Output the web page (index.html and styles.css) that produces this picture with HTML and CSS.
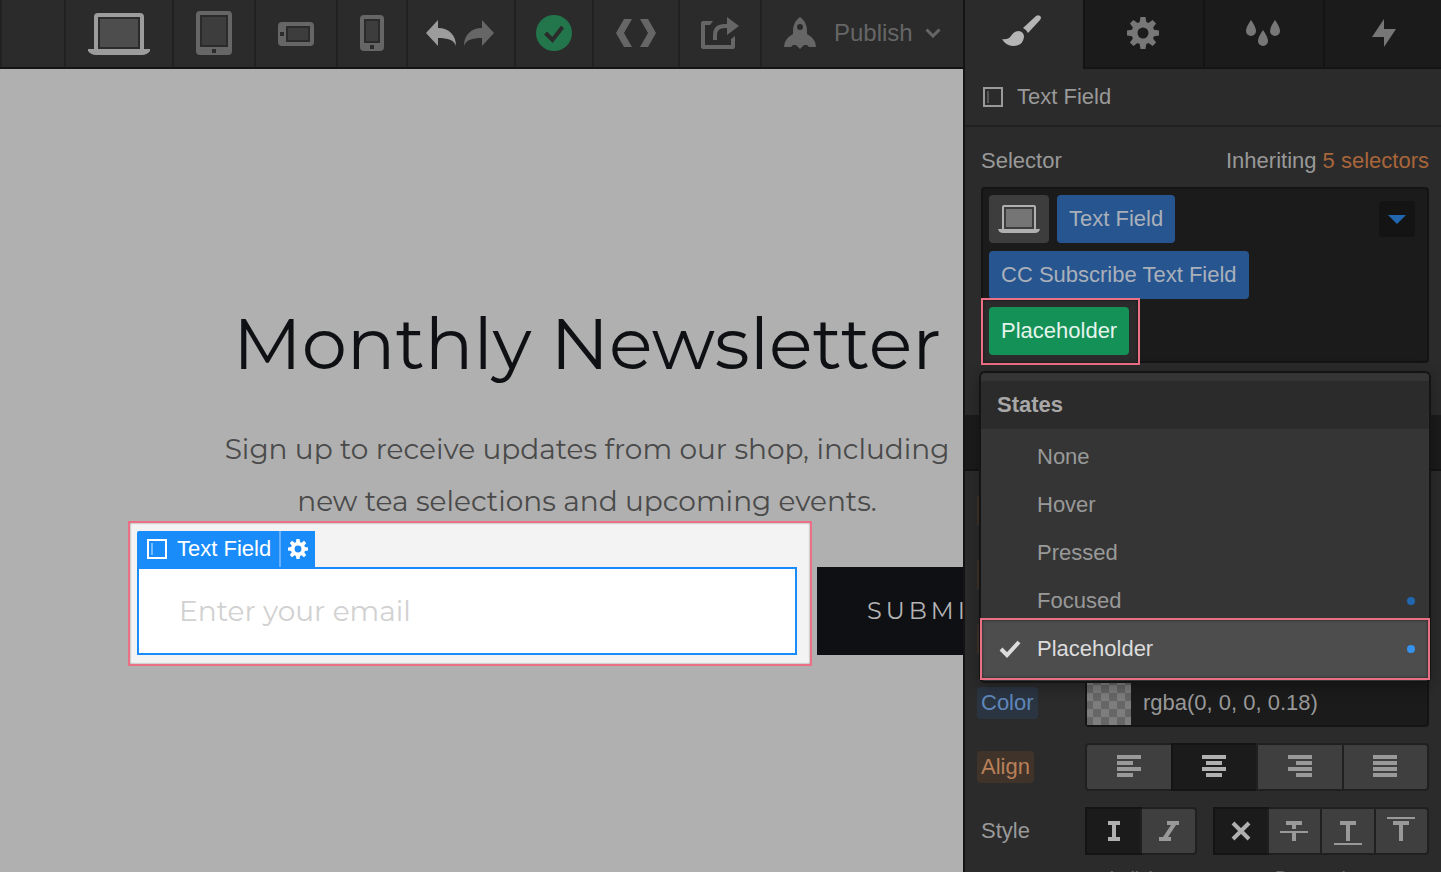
FILE: index.html
```html
<!DOCTYPE html>
<html lang="en">
	<head>
		<meta charset="utf-8">
		<title>Designer</title>
		<link rel="stylesheet" href="styles.css">
	</head>
	<body>
		<svg class="defs" width="0" height="0">
			<symbol id="gear" viewBox="0 0 32 32">
				<path fill-rule="evenodd" d="M13.5 0h5l.8 5 2.2.9 4.1-3 3.5 3.5-3 4.1.9 2.2 5 .8v5l-5 .8-.9 2.2 3 4.1-3.5 3.5-4.1-3-2.2.9-.8 5h-5l-.8-5-2.2-.9-4.1 3-3.5-3.5 3-4.1-.9-2.2-5-.8v-5l5-.8.9-2.2-3-4.1 3.5-3.5 4.1 3 2.2-.9zM16 10.500a5.500 5.500 0 1 0 0 11a5.500 5.500 0 1 0 0-11z"/>
			</symbol>
			<symbol id="field" viewBox="0 0 20 20">
				<path d="M1 1h18v18H1z" fill="none" stroke="currentColor" stroke-width="2"/>
				<path d="M4 4h2v12H4z" opacity=".4"/>
			</symbol>
		</svg>
		<div class="app">
			<main class="stage">
				<div class="toolbar">
					<div class="tool blank"></div>
					<button class="tool laptop on" aria-label="Desktop">
						<svg width="62" height="42" viewBox="0 0 62 42"><path d="M6 36V4q0-4 4-4h42q4 0 4 4v32h6v2q-3 4-8 4H8q-5 0-8-4v-2z"/><path d="M10 4h42v32H10z" fill="#2b2b2b"/><path d="M12 6h38v28H12z" fill="#4d4d4d"/></svg>
					</button>
					<button class="tool tablet" aria-label="Tablet">
						<svg width="36" height="44" viewBox="0 0 36 44"><rect width="36" height="44" rx="4"/><path d="M4 4h28v32H4zM16 38h4v4h-4z" fill="#2b2b2b"/><path d="M6 6h24v28H6z" fill="#3d3d3d"/></svg>
					</button>
					<button class="tool tablet low" aria-label="Phone landscape">
						<svg width="36" height="24" viewBox="0 0 36 24"><rect width="36" height="24" rx="4"/><path d="M8 4h24v16H8zM2 10h4v4H2z" fill="#2b2b2b"/><path d="M10 6h20v12H10z" fill="#3d3d3d"/></svg>
					</button>
					<button class="tool phone" aria-label="Phone portrait">
						<svg width="24" height="36" viewBox="0 0 24 36"><rect width="24" height="36" rx="4"/><path d="M4 4h16v24H4zM10 30h4v4h-4z" fill="#2b2b2b"/><path d="M6 6h12v20H6z" fill="#3d3d3d"/></svg>
					</button>
					<div class="tool history">
						<button class="on" aria-label="Undo">
							<svg width="30" height="26" viewBox="0 0 30 26"><path d="M0 13L12 0v8c11 0 18 7 18 18-2-6-8-8-18-8v8z"/></svg>
						</button>
						<button aria-label="Redo">
							<svg width="30" height="26" viewBox="0 0 30 26"><path d="M30 13L18 0v8C7 8 0 15 0 26c2-6 8-8 18-8v8z"/></svg>
						</button>
					</div>
					<button class="tool saved" aria-label="Saved">
						<svg width="36" height="36" viewBox="0 0 36 36"><circle cx="18" cy="18" r="18"/><path d="M9.500 18l7 7L26.500 12" fill="none" stroke="#2b2b2b" stroke-width="4"/></svg>
					</button>
					<button class="tool code" aria-label="Code">
						<svg width="40" height="28" viewBox="0 0 40 28"><path d="M8 0h8L8 14l8 14H8L0 14zM32 0h-8l8 14-8 14h8l8-14z"/></svg>
					</button>
					<button class="tool tablet" aria-label="Share">
						<svg width="38" height="32" viewBox="0 0 38 32"><path d="M12 4l-3 4H4v20h26v-6l4-3v11q0 2-2 2H2q-2 0-2-2V6q0-2 2-2z"/><path d="M26 0l12 9-12 9v-7h-2q-8 0-8 7v5h-4v-5Q12 7 24 7h2z"/></svg>
					</button>
					<button class="tool publish">
						<svg width="32" height="32" viewBox="0 0 32 32"><path fill-rule="evenodd" d="M16 0q7 5 7 14v3q9 5 9 13h-7l-2-2h-3l-4 4-4-4H9l-2 2H0q0-8 9-13v-3Q9 5 16 0zm0 7a3 3 0 1 0 0 6 3 3 0 1 0 0-6z"/></svg>
						<span>Publish</span>
						<svg width="16" height="10" viewBox="0 0 16 10"><path d="M1.500 1.500L8 8l6.500-6.500" fill="none" stroke="currentColor" stroke-width="3"/></svg>
					</button>
				</div>
				<section class="newsletter">
					<h1>Monthly Newsletter</h1>
					<p>Sign up to receive updates from our shop, including<br>new tea selections and upcoming events.</p>
					<form class="subscribe">
						<div class="email">
							<div class="tag">
								<span class="tag-name"><svg width="20" height="20"><use href="#field"/></svg>Text Field</span>
								<button type="button" aria-label="Settings"><svg width="20" height="20"><use href="#gear"/></svg></button>
							</div>
							<input type="email" placeholder="Enter your email" aria-label="Email">
						</div>
						<button type="submit">SUBMIT</button>
					</form>
				</section>
			</main>
			<aside class="panel">
				<nav class="tabs">
					<button class="active" aria-label="Style">
						<svg width="40" height="32" viewBox="0 0 40 32"><path d="M21 13L34 1q3-2 5 1 0 2-1 3L26 18q-1-3-5-5z"/><path d="M0 24q6 1 9-3 3-5 8-5 5 1 5 6-1 9-11 9-7 0-11-7z"/></svg>
					</button>
					<button aria-label="Settings"><svg width="32" height="32"><use href="#gear"/></svg></button>
					<button aria-label="Style manager">
						<svg width="34" height="26" viewBox="0 0 34 26"><path d="M5 0q5 7 5 11a5 5 0 0 1-10 0Q0 7 5 0zM29 0q5 7 5 11a5 5 0 0 1-10 0q0-4 5-11zM17 10q5 7 5 11a5 5 0 0 1-10 0q0-4 5-11z"/></svg>
					</button>
					<button aria-label="Interactions">
						<svg width="24" height="28" viewBox="0 0 24 28"><path d="M12 0v10h12L12 28V18H0z"/></svg>
					</button>
				</nav>
				<div class="element"><svg width="20" height="20"><use href="#field"/></svg>Text Field</div>
				<div class="selector">
					<div class="selector-head"><span>Selector</span><span>Inheriting <a href="#">5 selectors</a></span></div>
					<div class="chips">
						<div class="chip-row">
							<button class="chip device" aria-label="Breakpoint">
								<svg width="42" height="28" viewBox="0 0 42 28"><path d="M4 24V2q0-2 2-2h30q2 0 2 2v22h4q-1 4-5 4H5q-4 0-5-4z"/><path d="M6 2h30v22H6z" fill="#3d3d3d"/><path d="M8 4h26v18H8z" fill="#757575"/></svg>
							</button>
							<button class="chip">Text Field</button>
							<button class="drop" aria-label="States"><svg width="18" height="9" viewBox="0 0 18 9"><path d="M0 0h18L9 9z"/></svg></button>
						</div>
						<div class="chip-row"><button class="chip">CC Subscribe Text Field</button></div>
						<div class="chip-row picked"><button class="chip state">Placeholder</button></div>
					</div>
					<div class="menu">
						<h2>States</h2>
						<ul>
							<li><button>None</button></li>
							<li><button>Hover</button></li>
							<li><button>Pressed</button></li>
							<li><button>Focused<i class="dot"></i></button></li>
							<li class="current">
								<button><svg width="22" height="18" viewBox="0 0 22 18"><path d="M2 9l6 6L20 2" fill="none" stroke="currentColor" stroke-width="4"/></svg>Placeholder<i class="dot"></i></button>
							</li>
						</ul>
					</div>
				</div>
				<div class="section-bar"></div>
				<div class="props">
					<div class="prop"><span class="label inherited stub"></span></div>
					<div class="prop"><span class="label inherited stub"></span></div>
					<div class="prop"><span class="label inherited stub"></span></div>
					<div class="prop">
						<label class="label own" for="color">Color</label>
						<div class="color"><span class="swatch"></span><input id="color" type="text" value="rgba(0, 0, 0, 0.18)"></div>
					</div>
					<div class="prop">
						<span class="label inherited">Align</span>
						<div class="group">
							<button aria-label="Left"><svg width="24" height="22"><path d="M0 0h24v4H0zM0 6h16v4H0zM0 12h24v4H0zM0 18h16v4H0z"/></svg></button>
							<button class="active" aria-label="Center"><svg width="24" height="22"><path d="M0 0h24v4H0zM4 6h16v4H4zM0 12h24v4H0zM4 18h16v4H4z"/></svg></button>
							<button aria-label="Right"><svg width="24" height="22"><path d="M0 0h24v4H0zM8 6h16v4H8zM0 12h24v4H0zM8 18h16v4H8z"/></svg></button>
							<button aria-label="Justify"><svg width="24" height="22"><path d="M0 0h24v4H0zM0 6h24v4H0zM0 12h24v4H0zM0 18h24v4H0z"/></svg></button>
						</div>
					</div>
					<div class="prop">
						<span class="label">Style</span>
						<div class="styles">
							<div class="option">
								<div class="group">
									<button class="active" aria-label="Regular"><svg width="12" height="20"><path d="M0 0h12v4H8v12h4v4H0v-4h4V4H0z"/></svg></button>
									<button aria-label="Italic"><svg width="20" height="20"><path d="M8 0h12v4h-3L9 16h3v4H0v-4h4l8-12H8z"/></svg></button>
								</div>
								<small>Italicize</small>
							</div>
							<div class="option">
								<div class="group">
									<button class="active" aria-label="No decoration"><svg width="20" height="20"><path d="M2 2l16 16M18 2L2 18" fill="none" stroke="currentColor" stroke-width="4"/></svg></button>
									<button aria-label="Strikethrough"><svg width="28" height="28"><path d="M6 4h16v4h-4v4h-8zM0 14h28v2H0zM12 16h4v8h-4z" fill="none"/><path d="M6 4h16v4h-6v4h-4V8H6zM0 14h28v2H0zM12 16h4v8h-4z"/></svg></button>
									<button aria-label="Underline"><svg width="28" height="28"><path d="M6 4h16v4h-6v16h-4V8H6zM0 26h28v2H0z"/></svg></button>
									<button aria-label="Overline"><svg width="28" height="28"><path d="M6 4h16v4h-6v16h-4V8H6zM0 0h28v2H0z"/></svg></button>
								</div>
								<small>Decoration</small>
							</div>
						</div>
					</div>
				</div>
			</aside>
		</div>
	</body>
</html>
```
FILE: styles.css
```css
*{
	margin: 0;
	padding: 0;
	box-sizing: border-box;
	list-style: none;
	text-decoration: none;
}
body{
	font: 22px/26px "Liberation Sans", Arial, sans-serif;
	color: #999;
	background: #2b2b2b;
}
button{
	font: inherit;
	color: inherit;
	background: none;
	border: 0;
	border-radius: 0;
}
input{
	font: inherit;
	border: 0;
	outline: 0;
	min-width: 0;
}
svg{
	display: block;
	flex: none;
	fill: currentColor;
}
.defs{
	position: absolute;
}
.app{
	display: flex;
	height: 100vh;
	overflow: hidden;
}
.stage{
	flex: 1;
	min-width: 0;
	overflow: hidden;
	background: #b0b0b0;
}

/* top toolbar */
.toolbar{
	display: flex;
	height: 69px;
	background: #2b2b2b;
	border-bottom: 2px solid #141414;
	color: #666;
}
.tool{
	display: flex;
	flex: none;
	align-items: center;
	justify-content: center;
	width: 108px;
	padding-bottom: 2px;
	border-left: 2px solid #212121;
}
.on{
	color: #9c9c9c;
}
.laptop,
.low{
	padding-bottom: 0;
}
.blank{
	width: 64px;
}
.tablet{
	width: 82px;
}
.phone{
	width: 70px;
}
.history{
	gap: 8px;
	padding-right: 2px;
}
.saved{
	width: 78px;
	color: #23754c;
}
.code{
	width: 86px;
}
.publish{
	flex: 1;
	justify-content: flex-start;
	padding-left: 22px;
	font-size: 24px;
}
.publish span{
	margin: 0 12px 0 18px;
}

/* page being edited */
.newsletter{
	margin-right: -211px;
	padding: 224px 138px 0;
	font-family: Montserrat, Inter, sans-serif;
	text-align: center;
}
.newsletter h1{
	font-size: 72px;
	line-height: 100px;
	font-weight: 400;
	color: #0f1014;
	white-space: nowrap;
}
.newsletter p{
	margin-top: 30px;
	font-size: 28px;
	line-height: 52px;
	color: #4a4a4a;
	white-space: nowrap;
}
.subscribe{
	display: flex;
	gap: 20px;
	margin-top: 40px;
}
.email{
	position: relative;
	z-index: 0;
	flex: none;
	width: 660px;
	margin-left: -1px;
}
.email::before{
	content: "";
	position: absolute;
	z-index: -1;
	inset: -46px -15px -11px -9px;
	background: #f3f3f3;
	border: 2px solid #ec6f86;
	box-shadow: inset 0 0 2px #777;
}
.email input{
	display: block;
	width: 100%;
	height: 88px;
	padding: 0 40px;
	background: #fff;
	border: 2px solid #1a8cfa;
	font-size: 28px;
}
.email input::placeholder{
	color: #d1d1d1;
}
.tag{
	position: absolute;
	left: 0;
	bottom: 100%;
	display: flex;
	height: 36px;
	background: #1a8cfa;
	border-top-left-radius: 2px;
	color: #fff;
	font-family: "Liberation Sans", Arial, sans-serif;
}
.tag-name{
	display: flex;
	align-items: center;
	gap: 10px;
	padding: 0 8px 0 10px;
	white-space: nowrap;
}
.tag button{
	padding: 0 7px;
	border-left: 2px solid #66b0fb;
}
.subscribe > button{
	flex: 1;
	padding-left: 50px;
	background: #0f1014;
	color: #b4b4b4;
	font-size: 24px;
	letter-spacing: 4px;
	text-align: left;
}

/* style panel */
.panel{
	flex: none;
	width: 478px;
	border-left: 2px solid #141414;
	overflow: hidden;
}
.tabs{
	display: grid;
	grid-template-columns: 118px repeat(3, 120px);
	height: 69px;
	color: #777;
}
.tabs button{
	display: flex;
	align-items: center;
	justify-content: center;
	padding: 0 2px 2px 0;
	background: #1b1b1b;
	border-left: 2px solid #141414;
	border-bottom: 2px solid #141414;
}
.tabs button:last-child{
	padding-right: 0;
}
.tabs .active{
	padding: 0 4px 8px 0;
	background: none;
	border: 0;
	color: #b5b5b5;
}
.element{
	display: flex;
	align-items: center;
	gap: 14px;
	height: 58px;
	padding: 0 18px;
	border-bottom: 2px solid #202020;
}
.selector{
	position: relative;
	height: 288px;
	padding: 21px 12px 0 16px;
}
.selector-head{
	display: flex;
	justify-content: space-between;
	margin-bottom: 13px;
}
.selector-head a{
	color: #a9653a;
}
.chips{
	display: flex;
	flex-direction: column;
	gap: 8px;
	padding: 6px;
	background: #1b1b1b;
	border: 2px solid #141414;
	border-radius: 4px;
}
.chip-row{
	display: flex;
	align-items: center;
	gap: 8px;
}
.chip{
	position: relative;
	height: 48px;
	padding: 0 12px;
	background: #275590;
	border-radius: 4px;
	color: #a9b0ba;
}
.device{
	padding: 0 9px;
	background: #3d3d3d;
	color: #b0b0b0;
}
.drop{
	display: flex;
	align-items: center;
	justify-content: center;
	width: 36px;
	height: 36px;
	margin-left: auto;
	margin-right: 6px;
	background: #141414;
	border-radius: 4px;
	color: #2167b0;
}
.picked{
	position: relative;
	align-self: flex-start;
}
.picked::before{
	content: "";
	position: absolute;
	inset: -9px -11px -10px -8px;
	background: #2b2b2b;
	border: 2px solid #ec6f86;
	box-shadow: inset 0 0 3px #111;
}
.state{
	background: #149157;
	color: #e4f4ec;
}

/* states dropdown */
.menu{
	position: absolute;
	z-index: 2;
	top: 244px;
	left: 14px;
	right: 10px;
	padding: 8px 0 4px;
	background: #353535;
	border: 2px solid #141414;
	border-radius: 6px;
	box-shadow: 0 4px 16px rgba(0, 0, 0, .3);
}
.menu h2{
	padding: 0 16px;
	background: #2b2b2b;
	font-size: 22px;
	line-height: 48px;
	color: #a8a8a8;
}
.menu ul{
	padding: 4px 0;
}
.menu li{
	position: relative;
}
.menu li button{
	position: relative;
	display: flex;
	align-items: center;
	width: 100%;
	height: 48px;
	padding: 0 14px 0 56px;
}
.menu li svg{
	position: absolute;
	left: 18px;
}
.dot{
	width: 8px;
	height: 8px;
	margin-left: auto;
	background: #2167b0;
	border-radius: 50%;
}
.menu .current{
	color: #dcdcdc;
}
.current::before{
	content: "";
	position: absolute;
	inset: -7px -1px;
	background: #4d4d4d;
	border: 2px solid #ec6f86;
	box-shadow: inset 0 0 3px #222;
}
.current .dot{
	background: #3592ee;
}

/* typography settings */
.section-bar{
	height: 56px;
	background: #1b1b1b;
	border-bottom: 2px solid #141414;
}
.props{
	display: flex;
	flex-direction: column;
	gap: 16px;
	padding: 16px 12px 0 16px;
}
.prop{
	display: grid;
	grid-template-columns: 104px minmax(0, 1fr);
	align-items: start;
	min-height: 48px;
}
.label{
	justify-self: start;
	margin: 8px 0 0 -4px;
	padding: 0 4px;
	border-radius: 4px;
	line-height: 32px;
}
.inherited{
	background: #40332a;
	color: #b98059;
}
.own{
	background: #2b3542;
	color: #5f87ba;
}
.stub{
	width: 56px;
	height: 32px;
}
.color{
	display: flex;
	height: 48px;
	background: #1b1b1b;
	border: 2px solid #141414;
	border-radius: 4px;
}
.swatch{
	flex: none;
	width: 44px;
	background: repeating-conic-gradient(#666 0 25%, #7e7e7e 0 50%) 6px 4px / 16px 16px;
}
.color input{
	flex: 1;
	padding: 0 12px;
	background: none;
	color: #999;
}
.group{
	display: flex;
	height: 48px;
	background: #3f3f3f;
	border: 2px solid #202020;
	border-radius: 4px;
}
.group button{
	display: flex;
	flex: 1;
	align-items: center;
	justify-content: center;
	padding-bottom: 2px;
	border-left: 2px solid #202020;
}
.group button:first-child{
	border-left: 0;
}
.group .active{
	background: #1b1b1b;
	border-color: #141414;
	color: #b0b0b0;
	box-shadow: 0 -2px #141414, 0 2px #141414, 2px 0 #141414;
}
.group .active:first-child{
	box-shadow: 0 0 0 2px #141414;
}
.styles{
	display: grid;
	grid-template-columns: 112px minmax(0, 1fr);
	gap: 16px;
}
.styles .group button{
	padding: 0;
}
.option{
	text-align: center;
}
.option small{
	display: block;
	margin-top: 10px;
	font-size: 19px;
	line-height: 26px;
	color: #666;
}
```
